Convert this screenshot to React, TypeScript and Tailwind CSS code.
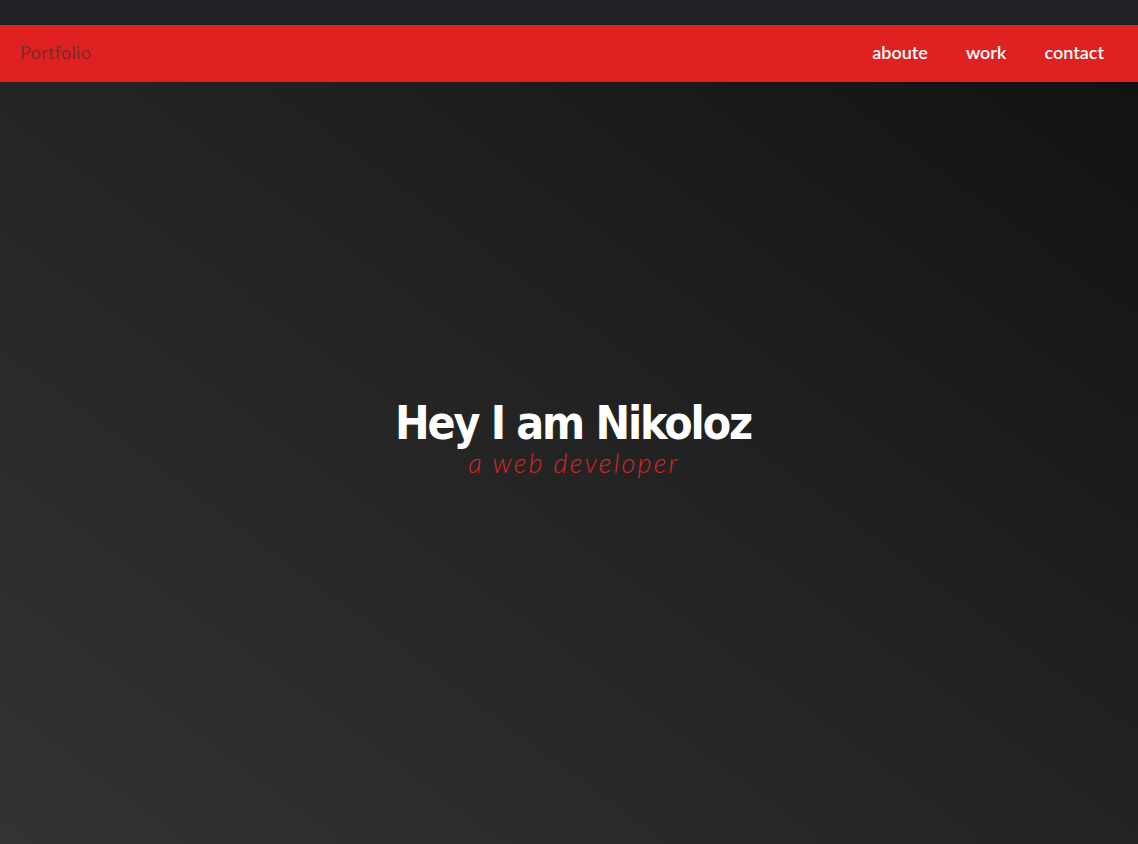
export default function App() {
  return (
    <div className="min-h-screen w-full flex flex-col bg-linear-to-tr from-[#333333] via-[#232323] to-[#111111] font-['Lato',sans-serif]">
      <div className="h-[25px] w-full bg-[#212126]" />
      <nav className="h-[57px] w-full bg-[#e02121] flex items-center justify-between pl-5 pr-[34px]">
        <a className="text-[18px] text-[#7c2a2a] tracking-[0.3px] -mt-[2px]">Portfolio</a>
        <ul className="flex items-center gap-[38px] text-[18px] font-semibold text-white -mt-[2px]">
          <li>aboute</li>
          <li>work</li>
          <li>contact</li>
        </ul>
      </nav>
      <main className="flex-1 flex flex-col items-center justify-center pb-[50px]">
        <h1 className="text-[46px] leading-[50px] font-bold text-white font-['DejaVu_Sans_Condensed','DejaVu_Sans',sans-serif] tracking-[-2.1px] pl-2">
          Hey I am Nikoloz
        </h1>
        <p className="text-[27px] leading-[30px] italic font-light text-[#d42727] tracking-[2.2px] pl-[10px]">
          a web developer
        </p>
      </main>
    </div>
  );
}
